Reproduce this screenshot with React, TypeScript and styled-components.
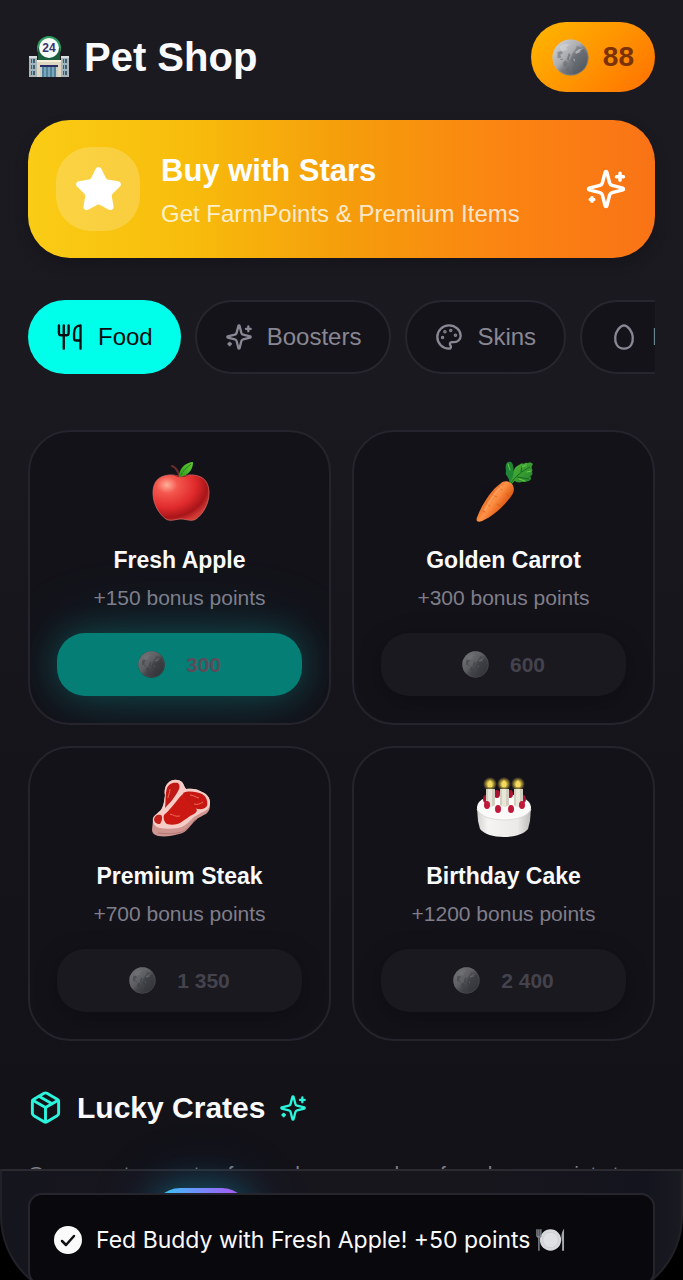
import React, { useId } from "react";
import styled, { createGlobalStyle, css } from "styled-components";
import { Gift, Home, Package, ShoppingBag, Star, Trophy, User } from "lucide-react";

const sans = `"Liberation Sans", Helvetica, Arial, sans-serif`;

const GlobalStyle = createGlobalStyle`
  *, *::before, *::after { box-sizing: border-box; }
  html, body { margin: 0; background: #000; }
  body { font-family: ${sans}; color: #fafafc; }
  button { font: inherit; color: inherit; border: 0; cursor: pointer; }
  h1, h2, h3, p { margin: 0; }
  svg { display: block; flex: none; }
`;

const Shell = styled.div`
  position: relative;
  height: 100vh;
  overflow: hidden;
  background: linear-gradient(180deg, #1b1a21 0%, #1a1920 30%, #15141b 60%, #111116 100%);
`;

const Page = styled.main`
  height: 100%;
  overflow-y: auto;
  scrollbar-width: none;
  padding: 22px 28px 160px;
`;

const Header = styled.header`
  display: flex;
  align-items: center;
  justify-content: space-between;
  height: 70px;
`;

const Title = styled.h1`
  display: flex;
  align-items: center;
  gap: 14px;
  font-size: 40px;
  line-height: 48px;
  font-weight: 700;
`;

const Balance = styled.button`
  display: flex;
  align-items: center;
  gap: 14px;
  height: 70px;
  padding: 0 21px;
  border-radius: 35px;
  background: linear-gradient(135deg, #ffb800 0%, #ff9500 50%, #ff7000 100%);
  color: #7a3206;
  font-size: 28px;
  font-weight: 700;
`;

const Banner = styled.button`
  display: flex;
  align-items: center;
  gap: 21px;
  width: 100%;
  margin-top: 28px;
  padding: 27px 28px;
  border-radius: 42px;
  background: linear-gradient(90deg, #facc15 0%, #f8bd0c 25%, #f59e0b 50%, #fb8412 76%, #f97316 100%);
  box-shadow: 0 6px 14px rgba(0, 0, 0, 0.2);
  color: #fff;
  text-align: left;
`;

const BannerIcon = styled.span`
  display: grid;
  place-items: center;
  width: 84px;
  height: 84px;
  border-radius: 35px;
  background: rgba(255, 255, 255, 0.2);
`;

const BannerText = styled.span`
  flex: 1;
  display: flex;
  flex-direction: column;
  gap: 2px;
`;

const BannerTitle = styled.span`
  font-size: 31px;
  line-height: 46px;
  font-weight: 700;
`;

const BannerNote = styled.span`
  font-size: 24px;
  line-height: 35px;
  color: rgba(255, 255, 255, 0.8);
`;

const Tabs = styled.nav`
  display: flex;
  gap: 14px;
  margin-top: 42px;
  overflow-x: auto;
  scrollbar-width: none;
`;

const Tab = styled.button<{ $active?: boolean }>`
  display: flex;
  flex: none;
  align-items: center;
  gap: 14px;
  height: 74px;
  padding: 0 28px;
  border-radius: 37px;
  font-size: 24px;
  background: #14131a;
  color: #898793;
  border: 2px solid #27262e;
  ${(p) =>
    p.$active &&
    css`
      background: #00ffea;
      color: #0b0b10;
      border: 0;
    `}
`;

const Grid = styled.section`
  display: grid;
  grid-template-columns: 1fr 1fr;
  gap: 21px;
  margin-top: 56px;
`;

const Card = styled.article`
  display: flex;
  flex-direction: column;
  align-items: center;
  padding: 27px;
  overflow: hidden;
  border: 2px solid #25242d;
  border-radius: 42px;
  background: #131219;
`;

const CardTitle = styled.h3`
  margin-top: 21px;
  font-size: 23px;
  line-height: 35px;
  font-weight: 700;
`;

const CardNote = styled.p`
  margin-top: 6px;
  font-size: 21px;
  line-height: 28px;
  color: #807e8a;
`;

const Price = styled.button<{ $available?: boolean }>`
  display: flex;
  align-items: center;
  justify-content: center;
  gap: 21px;
  width: 100%;
  height: 63px;
  margin-top: 21px;
  border-radius: 28px;
  font-size: 21px;
  font-weight: 700;
  background: #1a191f;
  color: #44434d;
  box-shadow: 0 6px 24px rgba(0, 0, 0, 0.3);
  ${(p) =>
    p.$available &&
    css`
      background: #057f76;
      color: #5b4c5a;
      box-shadow: 0 0 35px rgba(0, 255, 234, 0.22), 0 0 84px rgba(0, 200, 234, 0.12);
    `}
`;

const SectionTitle = styled.h2`
  display: flex;
  align-items: center;
  gap: 14px;
  margin-top: 42px;
  font-size: 30px;
  line-height: 49px;
  font-weight: 700;
`;

const Accent = styled.span`
  color: #2bf5dc;
`;

const SectionNote = styled.p`
  margin-top: 28px;
  font-size: 21px;
  line-height: 28px;
  color: #807e8a;
`;

const Dock = styled.div`
  position: absolute;
  left: 0;
  right: 0;
  bottom: -20px;
  background: #000;
`;

const DockNav = styled.nav`
  display: flex;
  justify-content: space-between;
  height: 131px;
  padding: 17px 10px 0;
  border: 2px solid #222128;
  border-top-color: #2b2a31;
  border-radius: 0 0 84px 84px;
  background: linear-gradient(90deg, #15151d 0%, #17161d 30%, #17161d 70%, #14141e 95%, #1a1a21 100%);
`;

const DockLink = styled.a<{ $active?: boolean }>`
  display: grid;
  place-items: center;
  width: 98px;
  height: 84px;
  border-radius: 28px;
  color: #898793;
  ${(p) =>
    p.$active &&
    css`
      background: linear-gradient(90deg, #22d3ee 0%, #5fa0fa 35%, #8b75f8 65%, #b04ff0 100%);
      color: #fff;
      box-shadow: 0 0 35px rgba(0, 230, 234, 0.3), 0 0 70px rgba(50, 110, 236, 0.2);
    `}
`;

const Toast = styled.div`
  position: absolute;
  left: 28px;
  right: 28px;
  bottom: -6px;
  display: flex;
  align-items: center;
  gap: 14px;
  height: 93px;
  padding: 0 24px;
  border: 2px solid #26252d;
  border-radius: 14px;
  background: #08080d;
  font-family: Inter, "Liberation Sans", sans-serif;
  font-size: 23px;
  font-weight: 400;
  color: #fafafa;
`;

const ToastText = styled.span`
  display: flex;
  align-items: center;
  gap: 6px;
  white-space: nowrap;
`;

function Coin({ size, dim }: { size: number; dim?: boolean }) {
  const id = useId();
  return (
    <svg width={size} height={size} viewBox="0 0 40 40" aria-hidden="true">
      <defs>
        <linearGradient id={id} x1="0.1" y1="0.1" x2="0.9" y2="0.9">
          <stop offset="0" stopColor="#cfd0d3" />
          <stop offset="0.42" stopColor="#a9abaf" />
          <stop offset="0.58" stopColor="#777a80" />
          <stop offset="1" stopColor="#4c5058" />
        </linearGradient>
      </defs>
      <circle cx="20" cy="20" r="19.5" fill={`url(#${id})`} />
      <path d="M27 7 25 12 22 16 20 23 24 27 22 32 24 38 32 34 37 27 38 18 34 11Z" fill="#5b5f66" opacity="0.4" />
      <path d="M6 14l4-1 2 2-3 2 1 3-4 1zM12 25l3-2 2 3-2 4-3-1zM17 30l2 2-1 4-3-2z" fill="#66696f" opacity="0.55" />
      <path d="M25 14l4-3 5-1-4 3 1 1-5 2zM23 21l2 1-1 3z" fill="#e4e6e8" opacity="0.5" />
      <path d="M8 8l6-3 6 1-5 3 2 3-7 1z" fill="#e6e8ea" opacity="0.35" />
      <path d="M18 15l2 2-2 4 1 3-3-2zM8 22l4-1-1 2z" fill="#4f5258" opacity="0.45" />
      <circle cx="20" cy="20" r="19" fill="none" stroke="#c5c7ca" strokeOpacity="0.3" />
      {dim && <circle cx="20" cy="20" r="20" fill="#111116" opacity="0.5" />}
    </svg>
  );
}

function StoreArt() {
  return (
    <svg width="42" height="42" viewBox="0 0 42 42" aria-hidden="true">
      <path d="M1 21h8v20H1zM33 21h8v20h-8z" fill="#a9b3b8" />
      <path d="M1 20h8v2H1zM33 20h8v2h-8z" fill="#d7dcdc" />
      <path d="M3 23h4v4H3zm0 6h4v4H3zm0 6h4v4H3zM35 23h4v4h-4zm0 6h4v4h-4zm0 6h4v4h-4z" fill="#465c6b" />
      <path d="M4 23h1v16H4zM36 23h1v16h-1z" fill="#8fb3c4" />
      <circle cx="21" cy="12" r="12" fill="#2b9a5c" />
      <path d="M10 12h22v13H10z" fill="#1b5e3e" />
      <path d="M9 25h24v16H9z" fill="#ddd6c0" />
      <path d="M9 24h24v2H9z" fill="#f4edda" />
      <path d="M12 30h18v11H12z" fill="#50819b" />
      <path d="M12 29h18v2H12z" fill="#2b2d68" />
      <path d="M12 31h2v10h-2zM28 31h2v10h-2z" fill="#c8ccc5" />
      <path d="M17 31v10M21 31v10M25 31v10" stroke="#a8cbd5" strokeWidth="1" />
      <circle cx="21" cy="12" r="10" fill="#f7fbf8" />
      <text x="21" y="16" textAnchor="middle" fontFamily={sans} fontSize="12" fontWeight="700" fill="#36346f">
        24
      </text>
    </svg>
  );
}

function AppleArt() {
  return (
    <svg width="63" height="63" viewBox="0 0 63 63" aria-hidden="true">
      <defs>
        <radialGradient id="appleSkin" cx="0.25" cy="0.22" r="0.85">
          <stop offset="0" stopColor="#ffb09a" />
          <stop offset="0.22" stopColor="#f4574e" />
          <stop offset="0.6" stopColor="#e02a2c" />
          <stop offset="0.85" stopColor="#a81519" />
          <stop offset="1" stopColor="#d23a36" />
        </radialGradient>
        <linearGradient id="appleLeaf" x1="0" y1="1" x2="1" y2="0">
          <stop offset="0" stopColor="#2f9a1c" />
          <stop offset="1" stopColor="#62cf35" />
        </linearGradient>
      </defs>
      <path d="M32 18C30 12 28 8 24 7" fill="none" stroke="#6b2c2c" strokeWidth="2" strokeLinecap="round" />
      <path
        d="M33 18c5-2 11-3 17-1 8 2 11 9 11 17 0 12-7 22-13 26-5 3-9 0-15 0s-10 3-15 0C12 56 5 46 5 34c0-8 3-15 11-17 6-2 12-1 17 1z"
        fill="url(#appleSkin)"
        stroke="#e0706a"
        strokeOpacity="0.7"
      />
      <path d="M26 16c4 3 10 3 15 0-3 0-5 1-8 2-3-1-4-2-7-2z" fill="#8e1b1c" />
      <path d="M31 18c0-8 5-14 14-15 0 9-6 14-14 15z" fill="url(#appleLeaf)" />
      <path d="M32 17c3-5 7-9 11-12" stroke="#2b7d17" strokeWidth="1" fill="none" />
    </svg>
  );
}

function CarrotArt() {
  return (
    <svg width="63" height="63" viewBox="0 -2 63 63" aria-hidden="true">
      <defs>
        <linearGradient id="carrotRoot" gradientUnits="userSpaceOnUse" x1="15" y1="35" x2="32" y2="47">
          <stop offset="0" stopColor="#e86c22" />
          <stop offset="0.4" stopColor="#ff9247" />
          <stop offset="1" stopColor="#dd560f" />
        </linearGradient>
        <linearGradient id="carrotLeaf" x1="0" y1="0" x2="1" y2="1">
          <stop offset="0" stopColor="#53b83a" />
          <stop offset="1" stopColor="#1f7f2a" />
        </linearGradient>
      </defs>
      <path d="M37 22c1-3-1-5-2-7-2-2-1-4-1-6-1-3 0-7 2-8 3-1 5 1 5 4 1 2 0 4 1 6 0 3-1 5-2 7l-1 5z" fill="#1f8636" />
      <path d="M38 22l3-7 1-6c1-3 3-4 5-5 1-1 3-2 5-1 1-2 3-1 4-1 2-1 4 0 5 1-1 2-2 3-1 5 1 1 0 2 0 3 1 2 0 4-2 4 2 2 1 4-1 5-3 1-5 1-7 1-3 1-6 0-7-1-1 0-2 2-4 4z" fill="url(#carrotLeaf)" />
      <path d="M39 22c4-6 11-12 19-16M45 16l12 2M49 11l1-6" stroke="#176b22" strokeWidth="1" fill="none" />
      <path d="M50 6l4-2M55 11l4-1M47 18l6 2M36 3l2 6" stroke="#6ccb44" strokeWidth="1" strokeLinecap="round" />
      <path d="M28 23c4-4 9-3 12 0 3 4 2 8 0 11-6 9-17 20-28 25-3 2-6 2-7 1s0-4 1-6c4-10 13-25 22-31z" fill="url(#carrotRoot)" />
      <path d="M27 26l3 3M21 34l4 2M37 35l-3-2M15 43l3 2M28 45l-3-2M11 50l2 1" stroke="#cf5511" strokeWidth="1" strokeLinecap="round" opacity="0.6" />
      <path d="M29 26c-6 6-12 15-16 23" stroke="#ffb57b" strokeWidth="2" strokeLinecap="round" fill="none" opacity="0.5" />
    </svg>
  );
}

function SteakArt() {
  return (
    <svg width="63" height="63" viewBox="0 -1 63 63" aria-hidden="true">
      <path d="M5 44c2-4 7-6 9-11 2-4 2-8 3-13-1-5 0-10 3-13 4-4 10-4 14-1 2 2 2 5 4 7 6-1 12 0 16 3 5 2 8 6 8 11 0 4 0 8-4 11-6 3-11 5-14 10-4 5-7 9-13 10-7 2-14 3-21 2-4-1-6-3-6-6z" fill="#cf9691" />
      <path d="M5 42c2-4 7-6 9-10 2-4 2-8 3-13-1-4 0-9 3-12 4-4 10-4 14-1 2 2 2 5 4 7 6-1 12 0 16 3 5 2 8 6 8 10s-1 7-5 9c-6 3-11 5-14 9-4 4-8 7-13 8-6 1-12 1-18 0-5-1-8-5-7-10z" fill="#f6cdc6" />
      <path d="M19 12c2-5 7-6 11-5 3 3 1 7-1 10-3 5-6 9-12 15 1-7 0-13 2-20z" fill="#bf1815" />
      <path d="M31 22c3-4 5-5 7-4 2 6 5 10 9 13 3 3 2 5-1 7-5 2-9 6-14 9-4 2-9 2-13 1-3-2-4-6-3-9 5-4 10-11 15-17z" fill="#cc1813" />
      <path d="M35 17c6-3 14-1 19 1 5 3 6 8 5 12-3 4-8 4-12 2-5-3-10-9-12-15z" fill="#c61713" />
      <path d="M6 43c1-4 4-5 7-4 2 2 1 6-1 9-4 0-6-2-6-5z" fill="#c3201b" />
      <path d="M42 19c3 0 5 2 9 3M46 28c3 1 6 0 9-2M22 38c4 1 5 3 10 2M22 13c0 4-2 6-2 9" stroke="#ee6a58" strokeWidth="1" fill="none" />
      <path d="M10 57c8 1 17 1 24-1 6-3 10-9 15-13" stroke="#a86a66" strokeWidth="1" fill="none" opacity="0.7" />
    </svg>
  );
}

function CakeArt() {
  return (
    <svg width="63" height="63" viewBox="0 -4 63 63" aria-hidden="true">
      <defs>
        <linearGradient id="cakeSide" x1="0" x2="1">
          <stop offset="0" stopColor="#d4d2cf" />
          <stop offset="0.2" stopColor="#f5f4f2" />
          <stop offset="0.75" stopColor="#eceae8" />
          <stop offset="1" stopColor="#bdbbb9" />
        </linearGradient>
        <radialGradient id="cakeFlame">
          <stop offset="0" stopColor="#fff6a8" />
          <stop offset="0.4" stopColor="#d6b93f" />
          <stop offset="1" stopColor="#b8a34a" stopOpacity="0" />
        </radialGradient>
      </defs>
      <path d="M5 28l1 14 2 8c4 5 13 8 24 8s20-3 24-8l2-8 1-14z" fill="url(#cakeSide)" />
      <ellipse cx="32" cy="28" rx="27" ry="13" fill="#fbfaf9" />
      <path d="M5 30c2 7 14 11 27 11s25-4 27-11" fill="none" stroke="#dddbd9" />
      <g fill="#a91331">
        <ellipse cx="14" cy="20" rx="3" ry="4" />
        <ellipse cx="25" cy="15" rx="3" ry="4" />
        <ellipse cx="38" cy="15" rx="3" ry="4" />
        <ellipse cx="51" cy="20" rx="3" ry="4" />
      </g>
      {[18, 32, 46].map((x) => (
        <g key={x}>
          <circle cx={x} cy="5" r="7" fill="url(#cakeFlame)" />
          <path d={`M${x - 4} 10h9v16q-4 3-9 0z`} fill="#cfcebf" />
          <path d={`M${x - 2} 10h4v17h-4z`} fill="#e9e7da" />
          <path d={`M${x} 1q-3 4-2 7h4q1-3-2-7z`} fill="#f3dc62" />
        </g>
      ))}
      <g fill="#c01839">
        <ellipse cx="15" cy="26" rx="3" ry="4" />
        <ellipse cx="26" cy="30" rx="3" ry="4" />
        <ellipse cx="39" cy="30" rx="3" ry="4" />
        <ellipse cx="50" cy="26" rx="3" ry="4" />
      </g>
    </svg>
  );
}

function LineIcon({ size, children }: { size: number; children: React.ReactNode }) {
  return (
    <svg
      width={size}
      height={size}
      viewBox="0 0 24 24"
      fill="none"
      stroke="currentColor"
      strokeWidth="2"
      strokeLinejoin="round"
      strokeLinecap="round"
      aria-hidden="true"
    >
      {children}
    </svg>
  );
}

function SparklesIcon({ size }: { size: number }) {
  return (
    <LineIcon size={size}>
      <path d="M9.937 15.5A2 2 0 0 0 8.5 14.063l-6.135-1.582a.5.5 0 0 1 0-.962L8.5 9.936A2 2 0 0 0 9.937 8.5l1.582-6.135a.5.5 0 0 1 .963 0L14.063 8.5A2 2 0 0 0 15.5 9.937l6.135 1.581a.5.5 0 0 1 0 .964L15.5 14.063a2 2 0 0 0-1.437 1.437l-1.582 6.135a.5.5 0 0 1-.963 0z" />
      <path d="M20 3v4M22 5h-4M4 17v2M5 18H3" />
    </LineIcon>
  );
}

function PaletteIcon() {
  return (
    <LineIcon size={28}>
      <circle cx="13.5" cy="6.5" r=".5" fill="currentColor" />
      <circle cx="17.5" cy="10.5" r=".5" fill="currentColor" />
      <circle cx="8.5" cy="7.5" r=".5" fill="currentColor" />
      <circle cx="6.5" cy="12.5" r=".5" fill="currentColor" />
      <path d="M12 2C6.5 2 2 6.5 2 12s4.500 10 10 10c.926 0 1.648-.746 1.648-1.688 0-.437-.18-.835-.437-1.125-.29-.289-.438-.652-.438-1.125a1.64 1.64 0 0 1 1.668-1.668h1.996c3.051 0 5.555-2.503 5.555-5.554C21.965 6.012 17.461 2 12 2z" />
    </LineIcon>
  );
}

function EggIcon() {
  return (
    <LineIcon size={28}>
      <path d="M12 22c6.230-.05 7.870-5.570 7.500-10-.36-4.340-3.950-9.960-7.500-10-3.550.04-7.140 5.660-7.500 10-.37 4.430 1.270 9.950 7.500 10z" />
    </LineIcon>
  );
}

function CutleryIcon() {
  return (
    <LineIcon size={28}>
      <path d="M2.500 2v6.500a2 2 0 0 0 2 2h4.300a2 2 0 0 0 2-2V2M6.650 2v20M21 22V2c-3.500 0-5.500 3-5.500 6.500V13a2 2 0 0 0 2 2H21" />
    </LineIcon>
  );
}

function CheckIcon() {
  return (
    <svg width="28" height="28" viewBox="0 0 28 28" aria-hidden="true">
      <circle cx="14" cy="14" r="14" fill="#fafafa" />
      <path d="M8 15l4 4 8-9" fill="none" stroke="#101014" strokeWidth="2.500" strokeLinecap="round" strokeLinejoin="round" />
    </svg>
  );
}

function PlateArt() {
  return (
    <svg width="29" height="26" viewBox="0 0 30 26" aria-hidden="true">
      <circle cx="15" cy="13" r="11" fill="#d7d9dc" />
      <circle cx="15" cy="13" r="8" fill="#e0e1e4" stroke="#cdcfd2" />
      <path d="M1 2v6q0 2 2 2t2-2V2M3 2v22" stroke="#83878d" strokeWidth="1.500" fill="none" />
      <path d="M29 1v23h-2V15q-2-8 2-14z" fill="#a4a8ad" />
    </svg>
  );
}

const products = [
  { name: "Fresh Apple", note: "+150 bonus points", price: "300", art: <AppleArt />, available: true },
  { name: "Golden Carrot", note: "+300 bonus points", price: "600", art: <CarrotArt /> },
  { name: "Premium Steak", note: "+700 bonus points", price: "1\u00a0350", art: <SteakArt /> },
  { name: "Birthday Cake", note: "+1200 bonus points", price: "2\u00a0400", art: <CakeArt /> },
];

const links = [
  { label: "Home", Icon: Home },
  { label: "Shop", Icon: ShoppingBag, active: true },
  { label: "Rewards", Icon: Gift },
  { label: "Ranking", Icon: Trophy },
  { label: "Profile", Icon: User },
];

export default function App() {
  return (
    <Shell>
      <GlobalStyle />
      <Page>
        <Header>
          <Title>
            <StoreArt />
            Pet Shop
          </Title>
          <Balance>
            <Coin size={37} />
            88
          </Balance>
        </Header>

        <Banner>
          <BannerIcon>
            <Star size={49} fill="currentColor" />
          </BannerIcon>
          <BannerText>
            <BannerTitle>Buy with Stars</BannerTitle>
            <BannerNote>Get FarmPoints &amp; Premium Items</BannerNote>
          </BannerText>
          <SparklesIcon size={42} />
        </Banner>

        <Tabs>
          <Tab $active>
            <CutleryIcon />
            Food
          </Tab>
          <Tab>
            <SparklesIcon size={28} />
            Boosters
          </Tab>
          <Tab>
            <PaletteIcon />
            Skins
          </Tab>
          <Tab>
            <EggIcon />
            Eggs
          </Tab>
        </Tabs>

        <Grid>
          {products.map((p) => (
            <Card key={p.name}>
              {p.art}
              <CardTitle>{p.name}</CardTitle>
              <CardNote>{p.note}</CardNote>
              <Price $available={p.available}>
                <Coin size={27} dim />
                {p.price}
              </Price>
            </Card>
          ))}
        </Grid>

        <SectionTitle>
          <Accent>
            <Package size={35} />
          </Accent>
          Lucky Crates
          <Accent>
            <SparklesIcon size={28} />
          </Accent>
        </SectionTitle>
        <SectionNote>Open mystery crates for random rewards or farm bonus points to</SectionNote>
      </Page>

      <Dock>
        <DockNav>
          {links.map(({ label, Icon, active }) => (
            <DockLink key={label} href="#" aria-label={label} $active={active}>
              <Icon size={35} />
            </DockLink>
          ))}
        </DockNav>
      </Dock>

      <Toast role="status">
        <CheckIcon />
        <ToastText>
          Fed Buddy with Fresh Apple! +50 points
          <PlateArt />
        </ToastText>
      </Toast>
    </Shell>
  );
}
